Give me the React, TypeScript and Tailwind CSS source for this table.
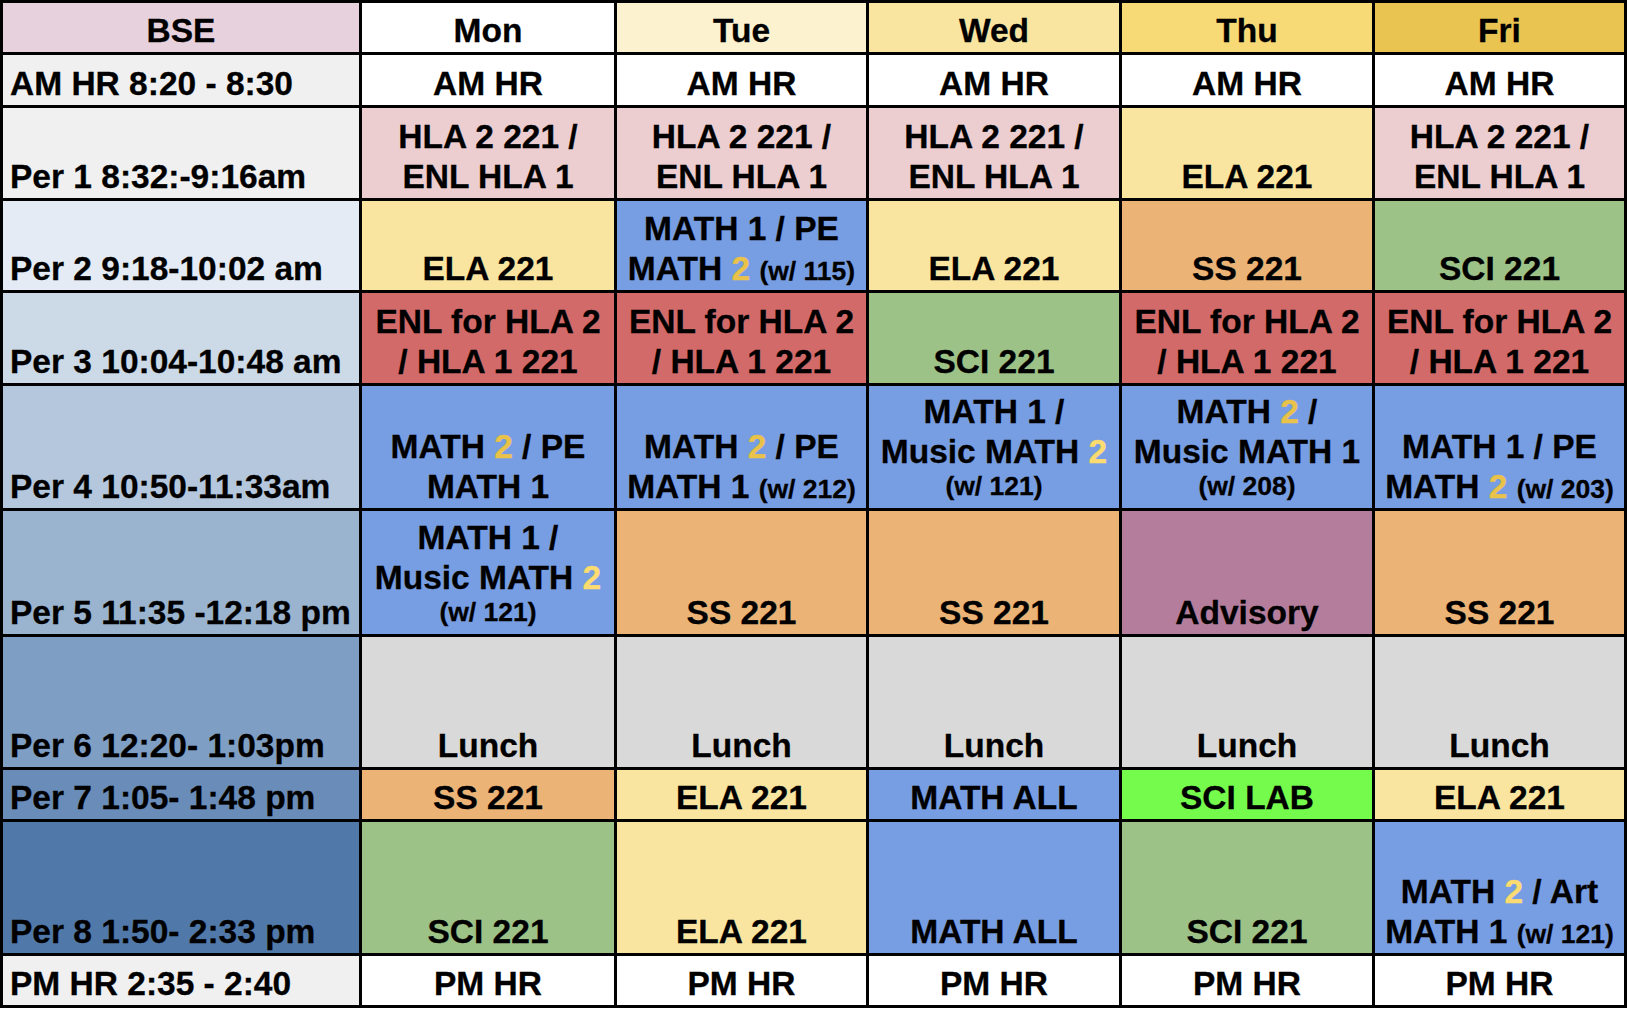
import React from "react";

type Seg = string | { t: string; c?: "gold" | "light"; s?: boolean };
type Line = { segs: Seg[]; small?: boolean };
type Cell = { bg: string; lines: Line[] };

const G = (t: string): Seg => ({ t, c: "gold" });
const Lt = (t: string): Seg => ({ t, c: "light" });
const S = (t: string): Seg => ({ t, s: true });

const l = (...segs: Seg[]): Line => ({ segs });
const sl = (t: string): Line => ({ segs: [t], small: true });

const PINK = "bg-[#eccdd0]";
const YEL = "bg-[#fae5a0]";
const BLUE = "bg-[#779de3]";
const RED = "bg-[#d26a69]";
const GRN = "bg-[#9dc287]";
const ORG = "bg-[#ebb375]";
const PUR = "bg-[#b47d9c]";
const GRAY = "bg-[#d9d9d9]";
const LIME = "bg-[#75fb4c]";
const WHITE = "bg-white";

const c = (bg: string, ...lines: Line[]): Cell => ({ bg, lines });

const HLA = (): Cell => c(PINK, l("HLA 2 221 /"), l("ENL HLA 1"));
const ENL = (): Cell => c(RED, l("ENL for HLA 2"), l("/ HLA 1 221"));
const one = (bg: string, t: string): Cell => c(bg, l(t));

const rows: { label: string; lbg: string; cells: Cell[] }[] = [
  {
    label: "AM HR 8:20 - 8:30",
    lbg: "bg-[#f0f0f0]",
    cells: [1, 2, 3, 4, 5].map(() => one(WHITE, "AM HR")),
  },
  {
    label: "Per 1 8:32:-9:16am",
    lbg: "bg-[#f0f0f0]",
    cells: [HLA(), HLA(), HLA(), one(YEL, "ELA 221"), HLA()],
  },
  {
    label: "Per 2 9:18-10:02 am",
    lbg: "bg-[#e4ebf4]",
    cells: [
      one(YEL, "ELA 221"),
      c(BLUE, l("MATH 1 / PE"), l("MATH ", G("2"), " ", S("(w/ 115)"))),
      one(YEL, "ELA 221"),
      one(ORG, "SS 221"),
      one(GRN, "SCI 221"),
    ],
  },
  {
    label: "Per 3 10:04-10:48 am",
    lbg: "bg-[#ccd9e7]",
    cells: [ENL(), ENL(), one(GRN, "SCI 221"), ENL(), ENL()],
  },
  {
    label: "Per 4 10:50-11:33am",
    lbg: "bg-[#b5c7dc]",
    cells: [
      c(BLUE, l("MATH ", G("2"), " / PE"), l("MATH 1")),
      c(BLUE, l("MATH ", G("2"), " / PE"), l("MATH 1 ", S("(w/ 212)"))),
      c(BLUE, l("MATH 1 /"), l("Music MATH ", Lt("2")), sl("(w/ 121)")),
      c(BLUE, l("MATH ", G("2"), " /"), l("Music MATH 1"), sl("(w/ 208)")),
      c(BLUE, l("MATH 1 / PE"), l("MATH ", G("2"), " ", S("(w/ 203)"))),
    ],
  },
  {
    label: "Per 5 11:35 -12:18 pm",
    lbg: "bg-[#9ab3cf]",
    cells: [
      c(BLUE, l("MATH 1 /"), l("Music MATH ", Lt("2")), sl("(w/ 121)")),
      one(ORG, "SS 221"),
      one(ORG, "SS 221"),
      one(PUR, "Advisory"),
      one(ORG, "SS 221"),
    ],
  },
  {
    label: "Per 6 12:20- 1:03pm",
    lbg: "bg-[#7f9ec4]",
    cells: [1, 2, 3, 4, 5].map(() => one(GRAY, "Lunch")),
  },
  {
    label: "Per 7 1:05- 1:48 pm",
    lbg: "bg-[#6a8cb8]",
    cells: [
      one(ORG, "SS 221"),
      one(YEL, "ELA 221"),
      one(BLUE, "MATH ALL"),
      one(LIME, "SCI LAB"),
      one(YEL, "ELA 221"),
    ],
  },
  {
    label: "Per 8 1:50- 2:33 pm",
    lbg: "bg-[#5078a8]",
    cells: [
      one(GRN, "SCI 221"),
      one(YEL, "ELA 221"),
      one(BLUE, "MATH ALL"),
      one(GRN, "SCI 221"),
      c(BLUE, l("MATH ", Lt("2"), " / Art"), l("MATH 1 ", S("(w/ 121)"))),
    ],
  },
  {
    label: "PM HR 2:35 - 2:40",
    lbg: "bg-[#f0f0f0]",
    cells: [1, 2, 3, 4, 5].map(() => one(WHITE, "PM HR")),
  },
];

const headers: { t: string; bg: string }[] = [
  { t: "Mon", bg: "bg-white" },
  { t: "Tue", bg: "bg-[#fdf2cf]" },
  { t: "Wed", bg: "bg-[#fae5a0]" },
  { t: "Thu", bg: "bg-[#f7d975]" },
  { t: "Fri", bg: "bg-[#e9c451]" },
];

function SegView({ s }: { s: Seg }) {
  if (typeof s === "string") return <>{s}</>;
  if (s.s) return <span className="text-[26.5px] leading-none">{s.t}</span>;
  if (s.c === "gold") return <span className="text-[#e9c24a]">{s.t}</span>;
  if (s.c === "light") return <span className="text-[#fcdc70]">{s.t}</span>;
  return <>{s.t}</>;
}

function CellView({ cell }: { cell: Cell }) {
  return (
    <div className={`${cell.bg} flex flex-col items-center justify-end text-center overflow-hidden pb-[2px]`}>
      {cell.lines.map((ln, i) =>
        ln.small ? (
          <div key={i} className="whitespace-nowrap text-[26.5px] leading-[31px] pb-[4px]">
            {ln.segs.map((s, j) => (
              <SegView key={j} s={s} />
            ))}
          </div>
        ) : (
          <div key={i} className="whitespace-nowrap">
            {ln.segs.map((s, j) => (
              <SegView key={j} s={s} />
            ))}
          </div>
        )
      )}
    </div>
  );
}

export default function App() {
  return (
    <div className="min-h-screen bg-white">
      <div
        className="inline-grid bg-black p-[3px] gap-[3px] grid-cols-[356px_252px_249px_250px_250px_249px] grid-rows-[49px_50px_90px_89px_90px_122px_123px_130px_49px_131px_49px] text-black font-bold text-[33.5px] leading-[39.5px] [-webkit-text-stroke:0.3px_currentColor]"
        style={{ fontFamily: '"Liberation Sans", Arial, sans-serif' }}
      >
        <div className="bg-[#e6d1dc] flex items-end justify-center pb-[2px]">BSE</div>
        {headers.map((h) => (
          <div key={h.t} className={`${h.bg} flex items-end justify-center pb-[2px]`}>
            {h.t}
          </div>
        ))}
        {rows.map((r) => (
          <React.Fragment key={r.label}>
            <div className={`${r.lbg} flex items-end pl-[7px] pb-[2px] whitespace-nowrap overflow-hidden`}>
              {r.label}
            </div>
            {r.cells.map((cell, i) => (
              <CellView key={i} cell={cell} />
            ))}
          </React.Fragment>
        ))}
      </div>
    </div>
  );
}
